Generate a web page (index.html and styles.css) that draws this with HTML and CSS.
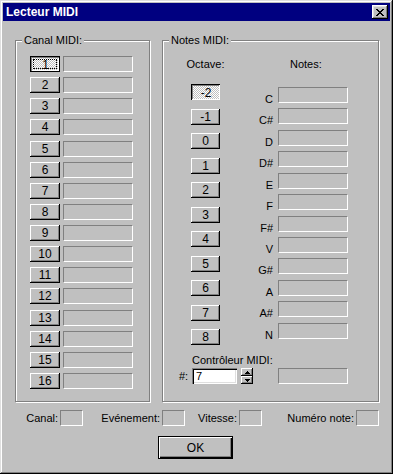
FILE: index.html
```html
<!DOCTYPE html>
<html lang="fr">
<head>
    <meta charset="UTF-8">
    <title>Lecteur MIDI</title>
    <link rel="stylesheet" href="styles.css">
</head>
<body>
    <div class="window">
        <div class="titlebar">
            <span class="title">Lecteur MIDI</span>
            <button class="close" aria-label="Fermer">
                <svg width="8" height="7" viewBox="0 0 8 7" shape-rendering="crispEdges">
                    <path d="M0 0h2v1H0zM6 0h2v1H6zM1 1h2v1H1zM5 1h2v1H5zM2 2h4v1H2zM3 3h2v1H3zM2 4h4v1H2zM1 5h2v1H1zM5 5h2v1H5zM0 6h2v1H0zM6 6h2v1H6z" fill="#000"/>
                </svg>
            </button>
        </div>

        <div class="groups">
            <div class="group canal">
                <span class="group-label">Canal MIDI:</span>
                <div class="canal-list">
                    <button class="btn on focus">1</button><span class="box"></span>
                    <button class="btn">2</button><span class="box"></span>
                    <button class="btn">3</button><span class="box"></span>
                    <button class="btn">4</button><span class="box"></span>
                    <button class="btn">5</button><span class="box"></span>
                    <button class="btn">6</button><span class="box"></span>
                    <button class="btn">7</button><span class="box"></span>
                    <button class="btn">8</button><span class="box"></span>
                    <button class="btn">9</button><span class="box"></span>
                    <button class="btn">10</button><span class="box"></span>
                    <button class="btn">11</button><span class="box"></span>
                    <button class="btn">12</button><span class="box"></span>
                    <button class="btn">13</button><span class="box"></span>
                    <button class="btn">14</button><span class="box"></span>
                    <button class="btn">15</button><span class="box"></span>
                    <button class="btn">16</button><span class="box"></span>
                </div>
            </div>

            <div class="group notes">
                <span class="group-label">Notes MIDI:</span>
                <div class="notes-cols">
                    <div class="octave-col">
                        <span class="col-head">Octave:</span>
                        <button class="btn on">-2</button>
                        <button class="btn">-1</button>
                        <button class="btn">0</button>
                        <button class="btn">1</button>
                        <button class="btn">2</button>
                        <button class="btn">3</button>
                        <button class="btn">4</button>
                        <button class="btn">5</button>
                        <button class="btn">6</button>
                        <button class="btn">7</button>
                        <button class="btn">8</button>
                    </div>
                    <div class="notes-col">
                        <span class="col-head notes-head">Notes:</span>
                        <div class="note-row"><span class="note-label">C</span><span class="box"></span></div>
                        <div class="note-row"><span class="note-label">C#</span><span class="box"></span></div>
                        <div class="note-row"><span class="note-label">D</span><span class="box"></span></div>
                        <div class="note-row"><span class="note-label">D#</span><span class="box"></span></div>
                        <div class="note-row"><span class="note-label">E</span><span class="box"></span></div>
                        <div class="note-row"><span class="note-label">F</span><span class="box"></span></div>
                        <div class="note-row"><span class="note-label">F#</span><span class="box"></span></div>
                        <div class="note-row"><span class="note-label">V</span><span class="box"></span></div>
                        <div class="note-row"><span class="note-label">G#</span><span class="box"></span></div>
                        <div class="note-row"><span class="note-label">A</span><span class="box"></span></div>
                        <div class="note-row"><span class="note-label">A#</span><span class="box"></span></div>
                        <div class="note-row"><span class="note-label">N</span><span class="box"></span></div>
                    </div>
                </div>

                <div class="ctrl">
                    <div class="ctrl-label">Contrôleur MIDI:</div>
                    <div class="ctrl-row">
                        <span class="hash">#:</span>
                        <input class="num" type="text" value="7">
                        <div class="spin">
                            <span class="spin-btn">
                                <svg width="5" height="3" viewBox="0 0 5 3" shape-rendering="crispEdges"><path d="M2 0h1v1H2zM1 1h3v1H1zM0 2h5v1H0z" fill="#000"/></svg>
                            </span>
                            <span class="spin-btn">
                                <svg width="5" height="3" viewBox="0 0 5 3" shape-rendering="crispEdges"><path d="M0 0h5v1H0zM1 1h3v1H1zM2 2h1v1H2z" fill="#000"/></svg>
                            </span>
                        </div>
                        <span class="box ctrl-box"></span>
                    </div>
                </div>
            </div>
        </div>

        <div class="status">
            <div class="stat s-canal"><span>Canal:</span><span class="box"></span></div>
            <div class="stat s-event"><span>Evénement:</span><span class="box"></span></div>
            <div class="stat s-vit"><span>Vitesse:</span><span class="box"></span></div>
            <div class="stat s-note"><span>Numéro note:</span><span class="box"></span></div>
        </div>

        <div class="actions">
            <button class="btn btn-ok">OK</button>
        </div>
    </div>
</body>
</html>
```

FILE: styles.css
```css
* {
    margin: 0;
    padding: 0;
    box-sizing: border-box;
}

body {
    background: #c0c0c0;
    font-family: 'Liberation Sans', Arial, sans-serif;
    font-size: 11px;
    color: #000;
}

.window {
    width: 393px;
    height: 474px;
    padding: 3px;
    background: #c0c0c0;
    box-shadow: inset -1px -1px #000, inset 1px 1px #dfdfdf,
                inset -2px -2px #808080, inset 2px 2px #fff;
}

/* title bar */
.titlebar {
    height: 18px;
    background: #000080;
    color: #fff;
    display: flex;
    align-items: center;
    justify-content: space-between;
    padding: 0 2px 0 3px;
}

.title {
    font-weight: bold;
    font-size: 12px;
}

.close {
    width: 16px;
    height: 14px;
    border: none;
    background: #c0c0c0;
    display: flex;
    align-items: center;
    justify-content: center;
    padding-top: 1px;
    box-shadow: inset -1px -1px #000, inset 1px 1px #fff,
                inset -2px -2px #808080, inset 2px 2px #dfdfdf;
}

/* group boxes */
.groups {
    display: flex;
    gap: 12px;
    margin-top: 19px;
    padding-left: 12px;
}

.group {
    position: relative;
    height: 362px;
    border: 1px solid #808080;
    box-shadow: 1px 1px #fff, inset 1px 1px #fff;
}

.group-label {
    position: absolute;
    top: -7px;
    left: 6px;
    padding: 0 2px;
    line-height: 13px;
    background: #c0c0c0;
}

.canal {
    width: 135px;
    padding: 15px 0 0 14px;
}

.notes {
    width: 217px;
    padding-top: 17px;
}

/* buttons */
.btn {
    border: none;
    background: #c0c0c0;
    font: inherit;
    font-size: 12px;
    color: #000;
    height: 16px;
    padding: 0;
    box-shadow: inset -1px -1px #000, inset 1px 1px #fff, inset -2px -2px #808080;
}

.btn.on {
    padding: 1px 0 0 1px;
    background: repeating-conic-gradient(#c0c0c0 0 25%, #fff 0 50%) 0 0 / 2px 2px;
    box-shadow: inset 1px 1px #000, inset -1px -1px #fff, inset 2px 2px #808080;
}

.btn.focus {
    box-shadow: inset 0 0 0 1px #000, inset 2px 2px #808080, inset -2px -2px #fff;
    outline: 1px dotted #000;
    outline-offset: -4px;
}

.box {
    display: block;
    height: 16px;
    border: 1px solid;
    border-color: #808080 #fff #fff #808080;
}

/* canal list */
.canal-list {
    display: grid;
    grid-template-columns: 30px 70px;
    grid-auto-rows: 16px;
    column-gap: 3px;
    row-gap: 5.13px;
}

/* notes */
.notes-cols {
    display: flex;
    gap: 21px;
    padding-left: 24px;
}

.col-head {
    height: 13px;
    line-height: 13px;
}

.octave-col {
    width: 37px;
    display: flex;
    flex-direction: column;
    align-items: center;
    gap: 8.5px;
}

.octave-col .col-head {
    margin-bottom: 4.5px;
}

.octave-col .btn {
    width: 29px;
}

.notes-col {
    display: flex;
    flex-direction: column;
    gap: 5.45px;
}

.notes-head {
    margin-left: 45px;
    margin-bottom: 10.55px;
}

.note-row {
    display: grid;
    grid-template-columns: 28px 70px;
    column-gap: 5px;
    height: 16px;
}

.note-label {
    text-align: right;
    line-height: 13px;
    margin-top: 6px;
}

/* controleur */
.ctrl {
    padding-left: 16px;
}

.ctrl-label {
    margin: 9px 0 0 13px;
    line-height: 13px;
}

.ctrl-row {
    display: flex;
    align-items: center;
    height: 16px;
    margin-top: 1px;
}

.hash {
    width: 13px;
}

.num {
    width: 45px;
    height: 16px;
    border: none;
    outline: none;
    background: #fff;
    font: inherit;
    padding: 0 0 0 4px;
    box-shadow: inset 1px 1px #808080, inset 2px 2px #000,
                inset -1px -1px #fff, inset -2px -2px #dfdfdf;
}

.spin {
    width: 12px;
    height: 16px;
    margin-left: 4px;
    display: flex;
    flex-direction: column;
}

.spin-btn {
    height: 8px;
    display: flex;
    align-items: center;
    justify-content: center;
    background: #c0c0c0;
    box-shadow: inset -1px -1px #000, inset 1px 1px #fff, inset -2px -2px #808080;
}

.ctrl-box {
    width: 70px;
    margin-left: 25px;
}

/* status row */
.status {
    display: flex;
    height: 16px;
    margin-top: 8px;
}

.stat {
    display: flex;
    align-items: center;
    justify-content: flex-end;
    gap: 2px;
}

.stat .box {
    width: 23px;
}

.s-canal { width: 80px; }
.s-event { width: 102px; }
.s-vit { width: 77px; }
.s-note { width: 117px; }

/* OK */
.actions {
    margin-top: 10px;
    padding-left: 155px;
}

.btn-ok {
    width: 75px;
    height: 23px;
    box-shadow: inset 0 0 0 1px #000, inset 2px 2px #fff,
                inset -2px -2px #000, inset -3px -3px #808080;
}
```
